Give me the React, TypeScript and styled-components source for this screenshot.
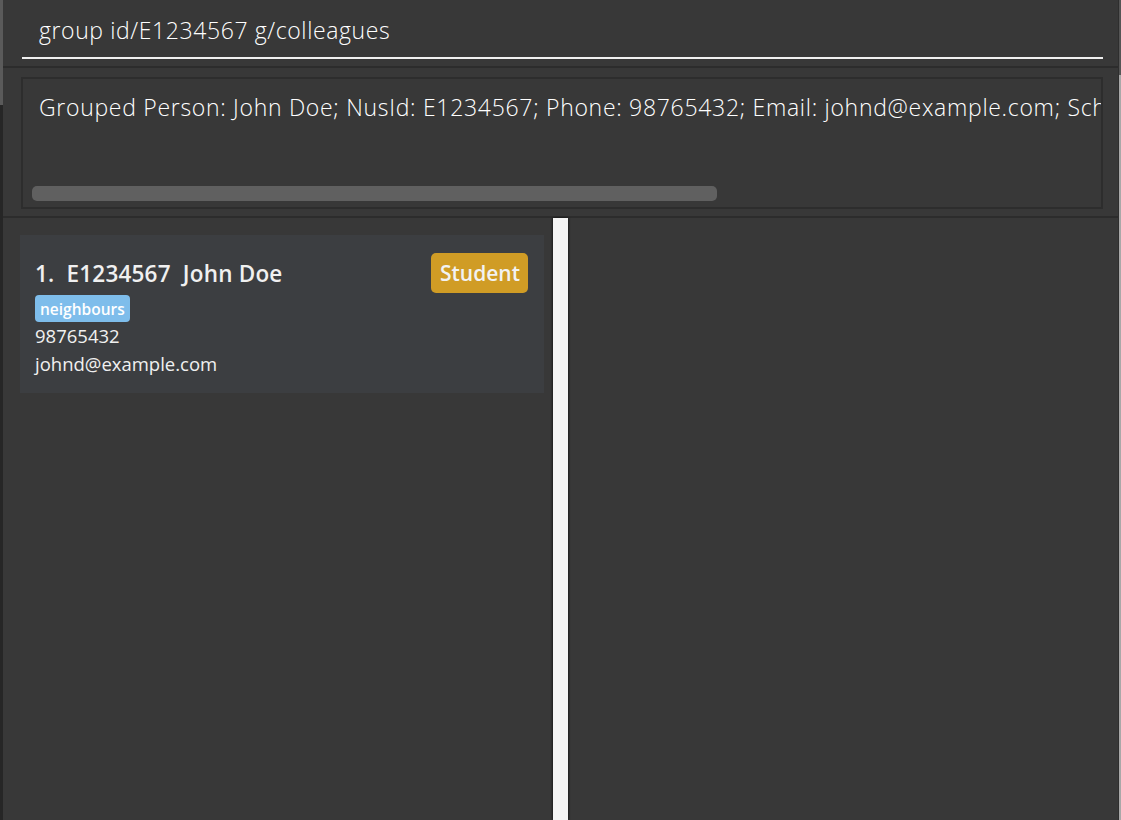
import React from "react";
import styled, { createGlobalStyle } from "styled-components";

const Global = createGlobalStyle`
  html, body { margin: 0; padding: 0; background: #383838; }
  body { font-family: "Open Sans", "Noto Sans", sans-serif; }
  * { box-sizing: border-box; }
`;

const Window = styled.div`
  width: 1121px;
  height: 820px;
  display: flex;
  flex-direction: row;
  background: #383838;
  overflow: hidden;
`;

const LeftEdge = styled.div`
  width: 3px;
  flex: none;
  background: linear-gradient(to bottom, #5a5a5a 0, #5a5a5a 105px, #262626 105px);
`;

const RightEdge = styled.div`
  width: 3px;
  flex: none;
  background: linear-gradient(to bottom, #555 0, #555 75px, #a8a8a8 75px);
  border-left: 1px solid #2e2e2e;
`;

const Main = styled.div`
  flex: 1;
  display: flex;
  flex-direction: column;
  min-width: 0;
`;

const CommandBar = styled.div`
  height: 66px;
  flex: none;
  padding: 13px 15px 0 19px;
  background: #383838;
`;

const CommandInput = styled.div`
  height: 46px;
  padding: 2px 0 0 17px;
  border-bottom: 2px solid #f0f0f0;
  color: #ffffff;
  font-size: 23px;
  font-weight: 300;
  letter-spacing: 0.6px;
  line-height: 30px;
  white-space: nowrap;
`;

const Separator = styled.div`
  height: 2px;
  flex: none;
  background: #2c2c2c;
`;

const ResultArea = styled.div`
  height: 148px;
  flex: none;
  padding: 9px 15px 7px 18px;
  display: flex;
`;

const ResultBox = styled.div`
  flex: 1;
  border: 2px solid #2d2d2d;
  display: flex;
  flex-direction: column;
  overflow: hidden;
`;

const ResultText = styled.div`
  padding: 13px 0 0 16px;
  color: #ffffff;
  font-size: 23px;
  font-weight: 300;
  letter-spacing: 0.7px;
  line-height: 30px;
  white-space: nowrap;
  overflow: hidden;
`;

const ScrollThumb = styled.div`
  margin: auto 0 6px 9px;
  width: 685px;
  height: 15px;
  border-radius: 5px;
  background: #606060;
`;

const Split = styled.div`
  flex: 1;
  display: flex;
  flex-direction: row;
  min-height: 0;
`;

const ListPanel = styled.div`
  width: 550px;
  flex: none;
  padding: 17px 9px 0 17px;
  background: #383838;
`;

const Divider = styled.div`
  width: 15px;
  flex: none;
  background: #f4f4f4;
  box-shadow: -1px 0 2px rgba(0, 0, 0, 0.45), 1px 0 2px rgba(0, 0, 0, 0.45);
  z-index: 1;
`;

const DetailPanel = styled.div`
  flex: 1;
  background: #383838;
`;

const Card = styled.div`
  background: #3c3e41;
  padding: 18px 16px 15px 15px;
  display: flex;
  flex-direction: column;
`;

const TitleRow = styled.div`
  height: 40px;
  display: flex;
  align-items: center;
  justify-content: space-between;
`;

const Title = styled.div`
  color: #f0f0f0;
  font-size: 22.5px;
  font-weight: 600;
  letter-spacing: 0.2px;
  white-space: pre;
`;

const RoleBadge = styled.div`
  height: 40px;
  padding: 0 8px 0 9px;
  display: flex;
  align-items: center;
  border-radius: 5px;
  background: #d09c25;
  color: #f2f2f2;
  font-size: 21px;
  font-weight: 600;
`;

const Tags = styled.div`
  display: flex;
  gap: 5px;
  margin-top: 2px;
`;

const Tag = styled.span`
  height: 27px;
  padding: 0 5px;
  display: inline-flex;
  align-items: center;
  border-radius: 4px;
  background: #7ebdeb;
  color: #ffffff;
  font-size: 15.5px;
  font-weight: 600;
`;

const Field = styled.div`
  color: #f0f0f0;
  font-size: 18.5px;
  line-height: 28px;
  white-space: nowrap;
`;

export default function App() {
  return (
    <>
      <Global />
      <Window>
        <LeftEdge />
        <Main>
          <CommandBar>
            <CommandInput>group id/E1234567 g/colleagues</CommandInput>
          </CommandBar>
          <Separator />
          <ResultArea>
            <ResultBox>
              <ResultText>
                Grouped Person: John Doe; NusId: E1234567; Phone: 98765432; Email: johnd@example.com; Sche
              </ResultText>
              <ScrollThumb />
            </ResultBox>
          </ResultArea>
          <Separator />
          <Split>
            <ListPanel>
              <Card>
                <TitleRow>
                  <Title>{"1.  E1234567  John Doe"}</Title>
                  <RoleBadge>Student</RoleBadge>
                </TitleRow>
                <Tags>
                  <Tag>neighbours</Tag>
                </Tags>
                <Field>98765432</Field>
                <Field>johnd@example.com</Field>
              </Card>
            </ListPanel>
            <Divider />
            <DetailPanel />
          </Split>
        </Main>
        <RightEdge />
      </Window>
    </>
  );
}
